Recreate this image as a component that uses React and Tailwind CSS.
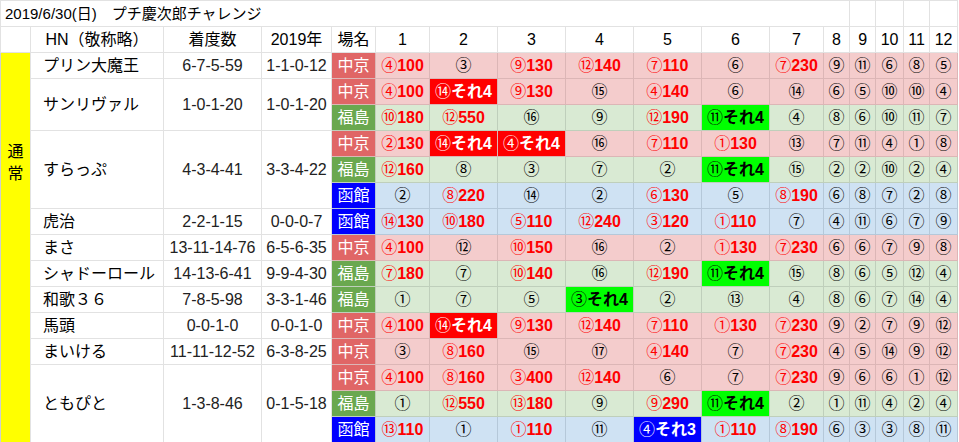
import React from "react";

const W = [30, 133, 98, 70, 44, 54, 68, 68, 68, 68, 68, 54, 26, 26, 28, 26, 28];

const rows = [
  ["中", "④100|③|⑨130|⑫140|⑦110|⑥|⑦230|⑨|⑪|⑥|⑧|⑤"],
  ["中", "④100|⑭それ4R|⑨130|⑮|④140|⑥|⑭|⑥|⑤|⑩|⑩|④"],
  ["福", "⑩180|⑫550|⑯|⑨|⑫190|⑪それ4G|④|⑧|⑥|⑩|⑪|⑦"],
  ["中", "②130|⑭それ4R|④それ4R|⑯|⑦110|①130|⑬|⑦|⑪|④|①|⑧"],
  ["福", "⑫160|⑧|③|⑦|②|⑪それ4G|⑮|②|②|⑩|②|④"],
  ["函", "②|⑧220|⑭|②|⑥130|⑤|⑧190|⑥|⑧|⑦|②|⑧"],
  ["函", "⑭130|⑩180|⑤110|⑫240|③120|①110|⑦|④|⑪|⑥|⑦|⑨"],
  ["中", "④100|⑫|⑩150|⑯|②|①130|⑦230|⑥|⑥|⑦|⑨|⑧"],
  ["福", "⑦180|⑦|⑩140|⑯|⑫190|⑪それ4G|⑮|⑧|⑥|⑤|⑫|④"],
  ["福", "①|⑦|⑤|③それ4G|②|⑬|④|⑧|⑥|⑦|⑭|④"],
  ["中", "④100|⑭それ4R|⑨130|⑫140|⑦110|①130|⑦230|⑨|②|⑦|⑨|⑫"],
  ["中", "③|⑧160|⑮|⑰|④140|⑦|⑦230|④|⑤|⑭|⑨|⑫"],
  ["中", "④100|⑧160|③400|⑫140|⑥|⑦|⑦230|⑨|⑥|⑥|①|⑫"],
  ["福", "①|⑫550|⑬180|⑨|⑨290|⑪それ4G|②|①|⑪|④|②|④"],
  ["函", "⑬110|①|①110|⑪|④それ3B|①110|⑧190|⑥|③|③|⑧|⑪"],
];

const left = {
  0: ["プリン大魔王", "6-7-5-59", "1-1-0-12", 1],
  1: ["サンリヴァル", "1-0-1-20", "1-0-1-20", 2],
  3: ["すらっぷ", "4-3-4-41", "3-3-4-22", 3],
  6: ["虎治", "2-2-1-15", "0-0-0-7", 1],
  7: ["まさ", "13-11-14-76", "6-5-6-35", 1],
  8: ["シャドーロール", "14-13-6-41", "9-9-4-30", 1],
  9: ["和歌３６", "7-8-5-98", "3-3-1-46", 1],
  10: ["馬頭", "0-0-1-0", "0-0-1-0", 1],
  11: ["まいける", "11-11-12-52", "6-3-8-25", 1],
  12: ["ともぴと", "1-3-8-46", "0-1-5-18", 3],
};

const venue = {
  中: ["中京", "bg-[#e06666]", "bg-[#f4cccc]", "border-[#dcb6b6]"],
  福: ["福島", "bg-[#6aa84f]", "bg-[#d9ead3]", "border-[#bfcfbb]"],
  函: ["函館", "bg-[#0000ff]", "bg-[#cfe2f3]", "border-[#b5c8d9]"],
};

const wb = "border border-[#e2e2e2]";

function Cell({ v, bg, bd }) {
  const circ = v.slice(0, 1);
  const rest = v.slice(1);
  let hl = null;
  let txt = rest;
  if (rest.endsWith("R") || rest.endsWith("G") || rest.endsWith("B")) {
    hl = rest.slice(-1);
    txt = rest.slice(0, -1);
  }
  const cls =
    hl === "R"
      ? "bg-[#ff0000] text-white"
      : hl === "G"
      ? "bg-[#00ff00] text-black"
      : hl === "B"
      ? "bg-[#0000ff] text-white"
      : bg + (txt ? " text-[#ff0000]" : " text-black");
  return (
    <td className={`${cls} border ${bd} text-center p-0 whitespace-nowrap overflow-hidden`}>
      <span className={txt ? "font-normal" : ""}>{circ}</span>
      {txt && <span className="font-bold">{txt}</span>}
    </td>
  );
}

export default function App() {
  return (
    <div className="w-[959px] h-[442px] bg-white overflow-hidden" style={{ fontFamily: '"Liberation Sans", "Noto Sans CJK JP", sans-serif' }}>
      <table className="table-fixed border-collapse text-[16px] leading-[24px] text-[#222]" style={{ width: 957 }}>
        <colgroup>
          {W.map((w, i) => (
            <col key={i} style={{ width: w }} />
          ))}
        </colgroup>
        <tbody>
          <tr className="h-[26px]">
            <td colSpan={13} className={`${wb} px-[4px] text-[15px] text-black whitespace-nowrap`}>2019/6/30(日)　プチ慶次郎チャレンジ</td>
            <td className={wb}></td>
            <td className={wb}></td>
            <td className={wb}></td>
            <td className={wb}></td>
          </tr>
          <tr className="h-[26px]">
            <td className={wb}></td>
            <td className={`${wb} text-center text-black`}>HN（敬称略）</td>
            <td className={`${wb} text-center text-black`}>着度数</td>
            <td className={`${wb} text-center text-black`}>2019年</td>
            <td className={`${wb} text-center text-black`}>場名</td>
            {[1, 2, 3, 4, 5, 6, 7, 8, 9, 10, 11, 12].map((n) => (
              <td key={n} className={`${wb} text-center text-black`}>{n}</td>
            ))}
          </tr>
          {rows.map(([vk, data], i) => {
            const [vn, vbg, rbg, bd] = venue[vk];
            const l = left[i];
            return (
              <tr key={i} className="h-[26px]">
                {i === 0 && (
                  <td rowSpan={15} className={`bg-[#ffff00] ${wb} border-l-[#cfcfcf] align-top p-0`}>
                    <div className="pt-[88px] flex flex-col items-center text-[16px] leading-[22px] text-black">
                      <span>通</span>
                      <span>常</span>
                    </div>
                  </td>
                )}
                {l && (
                  <>
                    <td rowSpan={l[3]} className={`${wb} pl-[12px] whitespace-nowrap text-black`}>{l[0]}</td>
                    <td rowSpan={l[3]} className={`${wb} text-center whitespace-nowrap`}>{l[1]}</td>
                    <td rowSpan={l[3]} className={`${wb} text-center whitespace-nowrap`}>{l[2]}</td>
                  </>
                )}
                <td className={`${vbg} border ${bd} text-white text-center`}>{vn}</td>
                {data.split("|").map((v, j) => (
                  <Cell key={j} v={v} bg={rbg} bd={bd} />
                ))}
              </tr>
            );
          })}
        </tbody>
      </table>
    </div>
  );
}
